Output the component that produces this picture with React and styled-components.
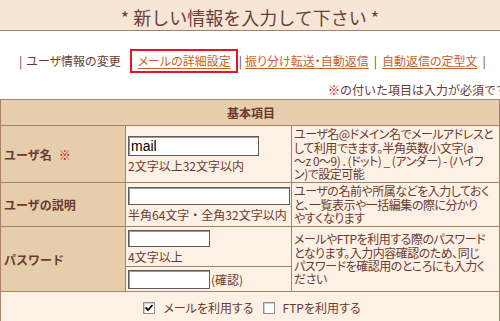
import React from 'react';
import styled, { createGlobalStyle } from 'styled-components';

const Global = createGlobalStyle`
  html, body { margin: 0; padding: 0; background: #fff; }
  body {
    width: 500px;
    height: 321px;
    overflow: hidden;
    font-family: "Noto Sans CJK JP", "Noto Sans", sans-serif;
    font-size: 12px;
    color: #6b3a2e;
  }
`;

const Header = styled.header`
  height: 31px;
  box-sizing: border-box;
  padding-top: 3px;
  background: #f7e6d5;
  border-bottom: 1px solid #a98168;
  display: flex;
  align-items: center;
  justify-content: center;
  font-size: 18px;
  color: #6b3d36;
  white-space: nowrap;
`;

const Nav = styled.nav`
  display: flex;
  align-items: center;
  height: 24px;
  margin-top: 18px;
  padding-left: 19px;
  white-space: nowrap;
  line-height: 14px;
  font-feature-settings: "palt";
`;

const Sep = styled.span`
  margin: 0 ${p => p.$r ?? 5}px 0 ${p => p.$l ?? 5}px;
  color: #6b3a2e;
`;

const Current = styled.span`
  color: #6b3a2e;
`;

const Highlight = styled.span`
  display: flex;
  align-items: center;
  box-sizing: border-box;
  height: 24px;
  margin-left: 9px;
  padding: 0 5px 0 6px;
  border: 2px solid #e8141e;
`;

const NavLink = styled.a`
  color: #c8622a;
  text-decoration: underline;
  text-underline-offset: 2px;
  cursor: pointer;
`;

const Note = styled.p`
  margin: 9px 0 0;
  padding-left: 328px;
  line-height: 16px;
  white-space: nowrap;
`;

const Mark = styled.span`
  color: #d4000a;
  font-weight: bold;
`;

const Form = styled.div`
  margin-top: 1px;
  display: grid;
  grid-template-columns: 124px 165px 207px;
  grid-template-rows: 25px 56px 43px 39px 24px 40px;
  gap: 1px;
  padding: 1px;
  width: 500px;
  box-sizing: border-box;
  background: #a98168;
`;

const SectionHead = styled.div`
  grid-column: 1 / -1;
  background: #e6cead;
  display: flex;
  align-items: center;
  justify-content: center;
  font-weight: bold;
  padding-left: 2px;
`;

const Label = styled.div`
  grid-row: span ${p => p.$rows || 1};
  background: #e6cead;
  display: flex;
  align-items: center;
  gap: 7px;
  padding-left: 3px;
  font-weight: bold;
  font-size: 12px;
`;

const InputCell = styled.div`
  background: #fdf1e6;
  display: flex;
  flex-direction: ${p => (p.$inline ? 'row' : 'column')};
  align-items: ${p => (p.$inline ? 'center' : 'flex-start')};
  justify-content: ${p => (p.$inline ? 'flex-start' : 'center')};
  padding: 0 2px;
`;

const TextInput = styled.input`
  box-sizing: border-box;
  width: ${p => p.$w}px;
  height: ${p => p.$h}px;
  margin: 0;
  padding: 0 2px;
  border: 1px solid #5c5c5c;
  box-shadow: inset 1px 1px 0 #9c9c9c;
  background: #fff;
  font-family: "Liberation Sans", Arial, sans-serif;
  font-size: 14px;
  color: #000;
  outline: none;
`;

const Hint = styled.span`
  margin-top: 3px;
  line-height: 14px;
  white-space: nowrap;
`;

const Suffix = styled.span`
  margin-left: 1px;
  white-space: nowrap;
`;

const Desc = styled.div`
  grid-row: span ${p => p.$rows || 1};
  background: #fdf1e6;
  display: flex;
  align-items: center;
  padding: 0 1px 0 2px;
  line-height: 13.4px;
  white-space: nowrap;
  overflow: hidden;
  font-feature-settings: "palt";
  letter-spacing: -0.5px;
`;

const Options = styled.div`
  grid-column: 1 / -1;
  background: #fdf1e6;
  display: flex;
  justify-content: center;
  align-items: flex-start;
  padding-top: 10px;
  padding-left: 4px;
  gap: 9px;
  font-feature-settings: "palt";
`;

const Option = styled.label`
  display: flex;
  align-items: center;
  gap: 8px;
  line-height: 12px;
  white-space: nowrap;
`;

const Box = styled.span`
  width: 12px;
  height: 12px;
  box-sizing: border-box;
  border: 1px solid #8f8f8f;
  box-shadow: inset 1px 1px 0 #d0d0d0;
  background: #fff;
  display: flex;
  align-items: center;
  justify-content: center;
`;

function Check({ checked }) {
  return (
    <Box>
      {checked && (
        <svg width="8" height="8" viewBox="0 0 8 8">
          <path d="M0.5 3.5 L3 6 L7.5 1" fill="none" stroke="#000" strokeWidth="1.8" />
        </svg>
      )}
    </Box>
  );
}

export default function App() {
  return (
    <>
      <Global />
      <Header>* 新しい情報を入力して下さい *</Header>
      <Nav>
        <Sep $l={0} $r={4}>|</Sep>
        <Current>ユーザ情報の変更</Current>
        <Highlight>
          <NavLink>メールの詳細設定</NavLink>
        </Highlight>
        <Sep $l={1} $r={3}>|</Sep>
        <NavLink>振り分け転送・自動返信</NavLink>
        <Sep>|</Sep>
        <NavLink>自動返信の定型文</NavLink>
        <Sep>|</Sep>
      </Nav>
      <Note>
        <Mark>※</Mark>の付いた項目は入力が必須です
      </Note>
      <Form>
        <SectionHead>基本項目</SectionHead>

        <Label>
          ユーザ名 <Mark>※</Mark>
        </Label>
        <InputCell>
          <TextInput $w={131} $h={20} defaultValue="mail" />
          <Hint>2文字以上32文字以内</Hint>
        </InputCell>
        <Desc>
          <span>
            ユーザ名@ドメイン名でメールアドレスと
            <br />
            して利用できます。半角英数小文字(a
            <br />
            ～z 0～9) . (ドット) _ (アンダー) - (ハイフ
            <br />
            ン)で設定可能
          </span>
        </Desc>

        <Label>ユーザの説明</Label>
        <InputCell>
          <TextInput $w={162} $h={18} />
          <Hint>半角64文字・全角32文字以内</Hint>
        </InputCell>
        <Desc>
          <span>
            ユーザの名前や所属などを入力しておく
            <br />
            と、一覧表示や一括編集の際に分かり
            <br />
            やすくなります
          </span>
        </Desc>

        <Label $rows={2}>パスワード</Label>
        <InputCell>
          <TextInput type="password" $w={82} $h={17} />
          <Hint>4文字以上</Hint>
        </InputCell>
        <Desc $rows={2}>
          <span>
            メールやFTPを利用する際のパスワード
            <br />
            となります。入力内容確認のため、同じ
            <br />
            パスワードを確認用のところにも入力く
            <br />
            ださい
          </span>
        </Desc>
        <InputCell $inline>
          <TextInput type="password" $w={82} $h={19} />
          <Suffix>(確認)</Suffix>
        </InputCell>

        <Options>
          <Option>
            <Check checked />
            メールを利用する
          </Option>
          <Option>
            <Check />
            FTPを利用する
          </Option>
        </Options>
      </Form>
    </>
  );
}
